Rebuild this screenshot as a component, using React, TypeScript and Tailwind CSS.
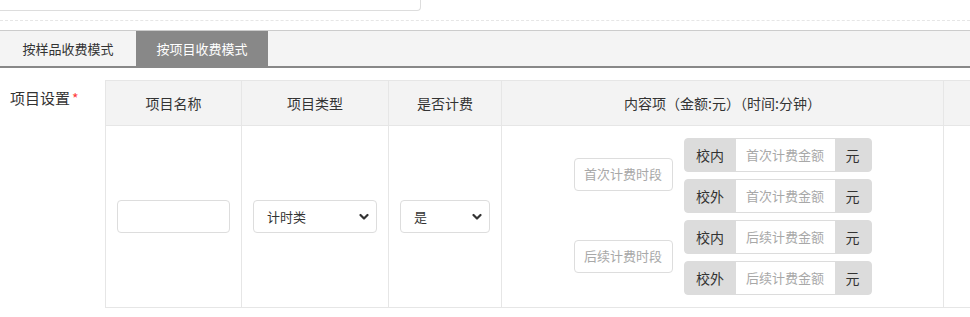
import React from 'react';

const font = { fontFamily: '"Noto Sans CJK SC", "Noto Sans", sans-serif' };

const Chevron = () => (
  <svg className="pointer-events-none absolute right-[8px] top-1/2 -translate-y-1/2" width="10" height="7" viewBox="0 0 10 7">
    <path d="M1.5 1.5 L5 5 L8.5 1.5" fill="none" stroke="#333" strokeWidth="2.2" strokeLinecap="round" strokeLinejoin="round" />
  </svg>
);

const SelectBox = ({ value }: { value: string }) => (
  <div className="relative w-full">
    <div className="h-[33px] w-full rounded-[4px] border border-[#dddddd] bg-white pl-[13px] text-[13px] leading-[31px] text-[#333]">
      {value}
    </div>
    <Chevron />
  </div>
);

const PriceGroup = ({ scope, placeholder }: { scope: string; placeholder: string }) => (
  <div className="flex h-[34px] w-[188px] overflow-hidden rounded-[4px] border border-[#dcdcdc] bg-[#dcdcdc]">
    <div className="flex w-[51px] items-center justify-center text-[14px] text-[#333]">{scope}</div>
    <div className="flex w-[99px] items-center justify-center bg-white text-[13px] text-[#a8a8a8]">{placeholder}</div>
    <div className="flex flex-1 items-center justify-center text-[14px] text-[#333]">元</div>
  </div>
);

const PeriodBlock = ({ period, amount }: { period: string; amount: string }) => (
  <div className="flex items-center gap-[11px]">
    <div className="mb-[3px] flex h-[33px] w-[99px] items-center justify-center rounded-[4px] border border-[#dddddd] text-[13px] text-[#a8a8a8]">
      {period}
    </div>
    <div className="flex flex-col gap-[7px]">
      <PriceGroup scope="校内" placeholder={amount} />
      <PriceGroup scope="校外" placeholder={amount} />
    </div>
  </div>
);

const App = () => {
  const headers = ['项目名称', '项目类型', '是否计费', '内容项（金额:元）（时间:分钟）', ''];

  return (
    <div className="h-[317px] w-[970px] overflow-hidden bg-white text-[#333]" style={font}>
      <div className="h-[11px] w-[421px] rounded-br-[4px] border-r border-b border-[#dddddd]" />
      <div className="mt-[9px] border-t border-dashed border-[#e6e6e6]" />

      <div className="mt-[9px] flex h-[38px] border-t border-b-2 border-t-[#cccccc] border-b-[#888888] bg-[#f4f4f4]">
        <div className="flex w-[136px] items-center justify-center text-[13px] text-[#333]">按样品收费模式</div>
        <div className="flex w-[132px] items-center justify-center bg-[#888888] text-[13px] text-white">按项目收费模式</div>
      </div>

      <div className="mt-[12px] flex">
        <div className="w-[105px] shrink-0 pl-[10px] pt-[5px]">
          <span className="text-[15px] text-[#333]">项目设置</span>
          <span className="ml-[2px] text-[14px] text-[#ff3b3b]">*</span>
        </div>

        <table className="shrink-0 table-fixed border-collapse">
          <colgroup>
            <col className="w-[136px]" />
            <col className="w-[147px]" />
            <col className="w-[113px]" />
            <col className="w-[442px]" />
            <col className="w-[100px]" />
          </colgroup>
          <thead>
            <tr className="h-[45px] bg-[#f3f3f3]">
              {headers.map((h, i) => (
                <th key={i} className="border border-[#e6e6e6] text-center text-[14px] font-normal text-[#333]">
                  {h}
                </th>
              ))}
            </tr>
          </thead>
          <tbody>
            <tr className="h-[182px]">
              <td className="border border-[#e6e6e6] px-[11px]">
                <div className="h-[33px] w-full rounded-[4px] border border-[#dddddd] bg-white" />
              </td>
              <td className="border border-[#e6e6e6] px-[11px]">
                <SelectBox value="计时类" />
              </td>
              <td className="border border-[#e6e6e6] px-[11px]">
                <SelectBox value="是" />
              </td>
              <td className="border border-[#e6e6e6]">
                <div className="flex flex-col items-center gap-[7px]">
                  <PeriodBlock period="首次计费时段" amount="首次计费金额" />
                  <PeriodBlock period="后续计费时段" amount="后续计费金额" />
                </div>
              </td>
              <td className="border border-[#e6e6e6]" />
            </tr>
          </tbody>
        </table>
      </div>
    </div>
  );
};

export default App;
